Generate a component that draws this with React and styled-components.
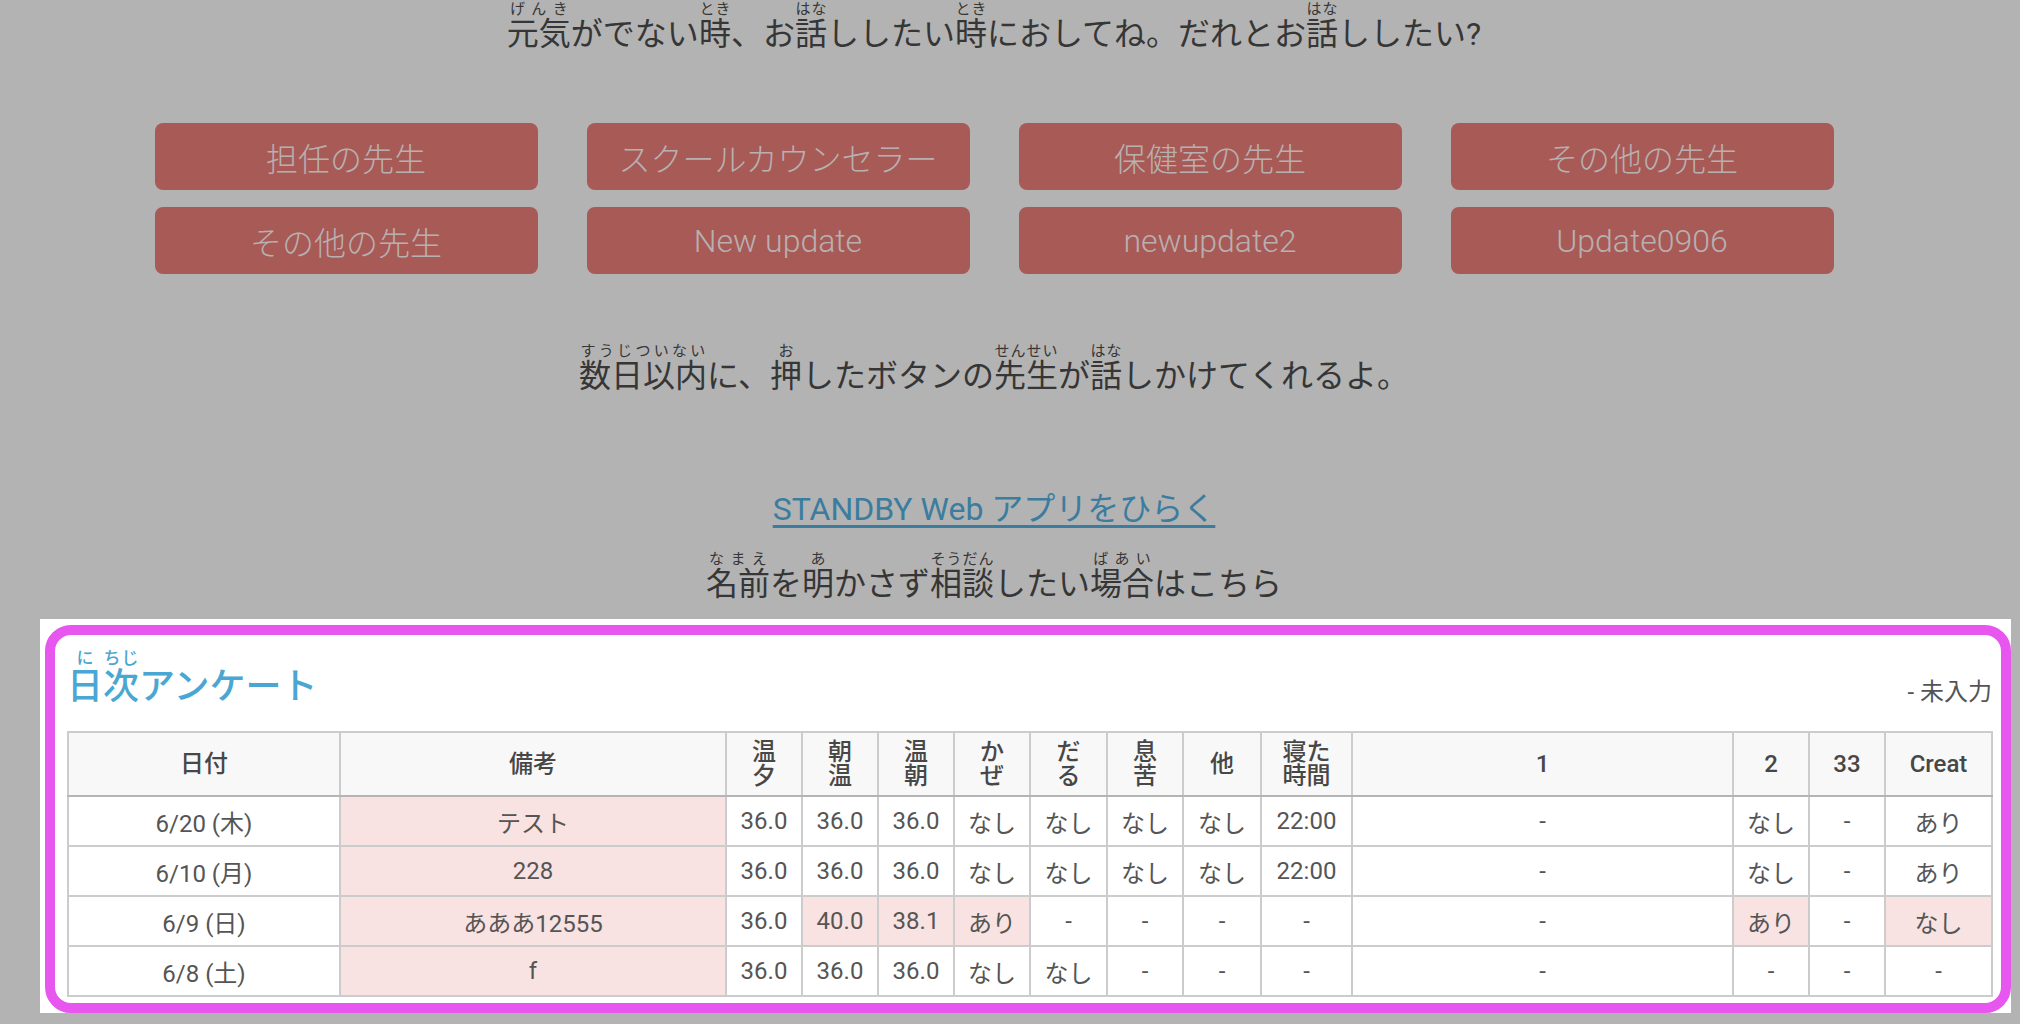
import React from 'react';
import styled, { createGlobalStyle } from 'styled-components';

const GlobalStyle = createGlobalStyle`
  html, body {
    margin: 0;
    padding: 0;
    background: #b3b3b3;
  }
  body {
    font-family: Roboto, "Noto Sans CJK JP", sans-serif;
    color: #363636;
  }
`;

const teachers = [
  '担任の先生',
  'スクールカウンセラー',
  '保健室の先生',
  'その他の先生',
  'その他の先生',
  'New update',
  'newupdate2',
  'Update0906',
];

const headers = [
  ['日付'],
  ['備考'],
  ['温', '夕'],
  ['朝', '温'],
  ['温', '朝'],
  ['か', 'ぜ'],
  ['だ', 'る'],
  ['息', '苦'],
  ['他'],
  ['寝た', '時間'],
  ['1'],
  ['2'],
  ['33'],
  ['Creat'],
];

const widths = [272, 386, 76, 76, 76, 76, 77, 76, 78, 91, 381, 76, 76, 107];

const rows = [
  {
    cells: ['6/20 (木)', 'テスト', '36.0', '36.0', '36.0', 'なし', 'なし', 'なし', 'なし', '22:00', '-', 'なし', '-', 'あり'],
    marked: [1],
  },
  {
    cells: ['6/10 (月)', '228', '36.0', '36.0', '36.0', 'なし', 'なし', 'なし', 'なし', '22:00', '-', 'なし', '-', 'あり'],
    marked: [1],
  },
  {
    cells: ['6/9 (日)', 'あああ12555', '36.0', '40.0', '38.1', 'あり', '-', '-', '-', '-', '-', 'あり', '-', 'なし'],
    marked: [1, 3, 4, 5, 11, 13],
  },
  {
    cells: ['6/8 (土)', 'f', '36.0', '36.0', '36.0', 'なし', 'なし', '-', '-', '-', '-', '-', '-', '-'],
    marked: [1],
  },
];

export default function App() {
  return (
    <>
      <GlobalStyle />
      <Page>
        <Lead>
          <ruby>元気<rt>げんき</rt></ruby>がでない<ruby>時<rt>とき</rt></ruby>、お<ruby>話<rt>はな</rt></ruby>ししたい<ruby>時<rt>とき</rt></ruby>におしてね。だれとお<ruby>話<rt>はな</rt></ruby>ししたい?
        </Lead>
        <ButtonGrid>
          {teachers.map((t, i) => (
            <TeacherButton key={i}>{t}</TeacherButton>
          ))}
        </ButtonGrid>
        <Note>
          <ruby>数日以内<rt>すうじついない</rt></ruby>に、<ruby>押<rt>お</rt></ruby>したボタンの<ruby>先生<rt>せんせい</rt></ruby>が<ruby>話<rt>はな</rt></ruby>しかけてくれるよ。
        </Note>
        <AppLink href="#">STANDBY Web アプリをひらく</AppLink>
        <Anon>
          <ruby>名前<rt>なまえ</rt></ruby>を<ruby>明<rt>あ</rt></ruby>かさず<ruby>相談<rt>そうだん</rt></ruby>したい<ruby>場合<rt>ばあい</rt></ruby>はこちら
        </Anon>
      </Page>
      <Panel>
        <Spotlight>
          <PanelHead>
            <Title>
              <ruby>日<rt>に</rt>次<rt>ちじ</rt></ruby>アンケート
            </Title>
            <Legend>- 未入力</Legend>
          </PanelHead>
          <Survey>
            <colgroup>
              {widths.map((w, i) => (
                <col key={i} style={{ width: w }} />
              ))}
            </colgroup>
            <thead>
              <tr>
                {headers.map((h, i) => (
                  <Th key={i}>
                    {h.map((line, j) => (
                      <HeadLine key={j}>{line}</HeadLine>
                    ))}
                  </Th>
                ))}
              </tr>
            </thead>
            <tbody>
              {rows.map((r, i) => (
                <tr key={i}>
                  {r.cells.map((c, j) => (
                    <Td key={j} $marked={r.marked.includes(j)}>
                      {c}
                    </Td>
                  ))}
                </tr>
              ))}
            </tbody>
          </Survey>
        </Spotlight>
      </Panel>
    </>
  );
}

const Page = styled.main`
  width: 1988px;
  display: flex;
  flex-direction: column;
  align-items: center;
  text-align: center;
  font-size: 32px;

  ruby rt {
    font-size: 15px;
    line-height: 1;
  }
`;

const Lead = styled.p`
  margin: 0;
  padding-top: 4px;
  line-height: 44px;
`;

const ButtonGrid = styled.div`
  display: grid;
  grid-template-columns: repeat(4, 383px);
  column-gap: 49px;
  row-gap: 17px;
  margin-top: 67px;
`;

const TeacherButton = styled.button`
  height: 67px;
  border: none;
  border-radius: 8px;
  background: #a85a56;
  color: #b8b0b0;
  font-family: Roboto, "Noto Sans CJK JP", sans-serif;
  font-size: 32px;
  font-weight: 300;
  padding: 0;
  cursor: pointer;
`;

const Note = styled.p`
  margin: 68px 0 0;
  line-height: 44px;
`;

const AppLink = styled.a`
  margin-top: 89px;
  color: #3b7c9f;
  text-decoration: underline;
  text-underline-offset: 5px;
  line-height: 44px;
`;

const Anon = styled.p`
  margin: 19px 0 0;
  line-height: 44px;
`;

const Panel = styled.section`
  margin: 13px 0 0 40px;
  width: 1966px;
  background: #fff;
  padding: 6px 0 0 5px;
`;

const Spotlight = styled.div`
  border: 10px solid #e856f0;
  border-radius: 26px;
  padding: 14px 9px 6px 12px;
`;

const PanelHead = styled.div`
  display: flex;
  align-items: flex-end;
  justify-content: space-between;
  padding-bottom: 22px;
`;

const Title = styled.h2`
  margin: 0;
  color: #4aa6d2;
  font-size: 36px;
  font-weight: 500;
  line-height: 44px;

  ruby rt {
    font-size: 17px;
    line-height: 1;
  }
`;

const Legend = styled.span`
  font-size: 24px;
  color: #555;
  padding-bottom: 2px;
`;

const Survey = styled.table`
  width: 1924px;
  table-layout: fixed;
  border-collapse: collapse;
  border: 2px solid #b5b5b5;
  color: #555;
  font-size: 24px;
  text-align: center;
`;

const Th = styled.th`
  background: #f8f8f8;
  border: 2px solid #cccccc;
  border-bottom-color: #b5b5b5;
  height: 62px;
  padding: 0 4px;
  font-weight: 500;
  color: #474747;
  font-size: 24px;
  line-height: 24px;
`;

const HeadLine = styled.span`
  display: block;
`;

const Td = styled.td`
  border: 2px solid #cccccc;
  height: 48px;
  padding: 0 4px;
  background: ${(p) => (p.$marked ? '#f8e2e2' : '#fff')};
`;
